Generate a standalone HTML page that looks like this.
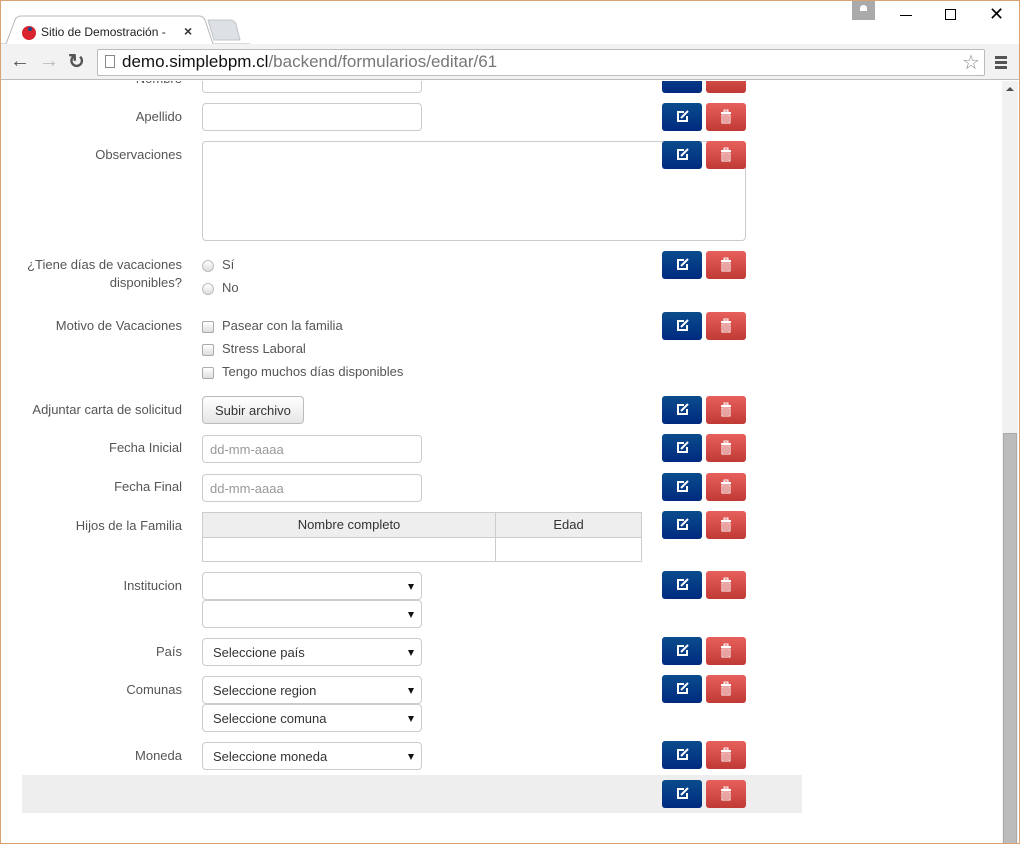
<!DOCTYPE html>
<html><head><meta charset="utf-8"><style>
*{box-sizing:border-box;margin:0;padding:0}
body{width:1020px;height:844px;overflow:hidden;background:#fff;font-family:"Liberation Sans",Arial,sans-serif;font-size:13px;color:#333;position:relative}
.a{position:absolute}
.lbl{position:absolute;right:838px;text-align:right;color:#555;font-size:13px;line-height:18px}
.inp{position:absolute;left:202px;width:220px;height:28px;border:1px solid #ccc;border-radius:4px;background:#fff;color:#999;font-size:13px;padding:6px 7px}
.sel{position:absolute;left:202px;width:220px;height:28px;border:1px solid #ccc;border-radius:4px;background:#fff;color:#333;font-size:13px;padding:6px 10px}
.sel:after{content:"";position:absolute;right:7px;top:11px;border-left:3.5px solid transparent;border-right:3.5px solid transparent;border-top:6px solid #111}
.be{position:absolute;left:662px;width:40px;height:28px;border-radius:3px;background:linear-gradient(#0a4c8c,#002a80);}
.bd{position:absolute;left:706px;width:40px;height:28px;border-radius:3px;background:linear-gradient(#e8605c,#c03a35);}
.opt{position:absolute;left:222px;color:#555;font-size:13px}
.rad{position:absolute;left:202px;width:12px;height:12px;border-radius:50%;border:1px solid #bbb;background:linear-gradient(#fff,#ddd)}
.chk{position:absolute;left:202px;width:12px;height:12px;border-radius:2px;border:1px solid #aaa;background:linear-gradient(#fff,#ddd)}
</style></head><body>
<!-- window frame -->
<div class="a" style="left:0;top:0;width:1020px;height:844px;border:1px solid #d9a273;border-top-width:1px;pointer-events:none;z-index:10"></div>
<div class="a" style="left:0;top:0;width:1020px;height:44px;background:#fff"></div>
<!-- tab -->
<svg class="a" style="left:0;top:15px" width="250" height="30"><path d="M6 29 L15 5 Q17 1 21 1 L199 1 Q203 1 205 5 L213 29" fill="#fff" stroke="#b7b7b7"/><path d="M208 5 L230 5 Q234 5 236 9 L240 25 L214 25 Z" fill="#dde1e6" stroke="#c0c4c8"/><path d="M0 29 L6 29 M213 29 L1020 29" stroke="#b7b7b7"/></svg>
<div class="a" style="left:22px;top:26px;width:14px;height:14px;border-radius:50%;background:#d9232e"></div>
<div class="a" style="left:28px;top:27px;width:4px;height:4px;border-radius:50%;background:#1b4b8a"></div>
<div class="a" style="left:41px;top:25px;font-size:12px;color:#222;width:125px;overflow:hidden;white-space:nowrap">Sitio de Demostración - Fo</div>
<div class="a" style="left:184px;top:23px;font-size:14px;color:#333;font-weight:bold">×</div>
<div class="a" style="left:852px;top:1px;width:23px;height:19px;background:#aaa"></div>
<div class="a" style="left:860px;top:5px;width:7px;height:6px;border-radius:50% 50% 0 0;background:#fff"></div>
<div class="a" style="left:900px;top:15px;width:12px;height:1px;background:#000"></div>
<div class="a" style="left:945px;top:9px;width:11px;height:11px;border:1px solid #000"></div>
<div class="a" style="left:989px;top:4px;font-size:18px;color:#000">✕</div>
<!-- toolbar -->
<div class="a" style="left:1px;top:44px;width:1018px;height:36px;background:#f2f2f2;border-bottom:1px solid #bdbdbd"></div>
<div class="a" style="left:10px;top:50px;font-size:20px;color:#555;font-weight:bold">←</div>
<div class="a" style="left:39px;top:50px;font-size:20px;color:#bbb;font-weight:bold">→</div>
<div class="a" style="left:68px;top:49px;font-size:20px;color:#555;font-weight:bold">↻</div>
<div class="a" style="left:97px;top:49px;width:888px;height:27px;background:#fff;border:1px solid #bbb;border-radius:2px"></div>
<div class="a" style="left:105px;top:55px;width:10px;height:13px;border:1px solid #888;background:#fff"></div>
<div class="a" style="left:122px;top:52px;font-size:17px;color:#111">demo.simplebpm.cl<span style="color:#777">/backend/formularios/editar/61</span></div>
<div class="a" style="left:962px;top:50px;font-size:20px;color:#888">☆</div>
<div class="a" style="left:995px;top:56px;width:12px;height:3px;background:#555;box-shadow:0 5px 0 #555,0 10px 0 #555"></div>
<!-- scrollbar -->
<div class="a" style="left:1002px;top:81px;width:16px;height:763px;background:#f1f1f1"></div>
<div class="a" style="left:1006px;top:87px;border-left:4px solid transparent;border-right:4px solid transparent;border-bottom:4px solid #505050"></div>
<div class="a" style="left:1003px;top:433px;width:14px;height:411px;background:#bcbcbc;border:1px solid #aaa"></div>
<!-- content -->
<div class="a" style="left:22px;top:775px;width:780px;height:38px;background:#eee"></div>
<div class="lbl" style="top:70px;clip-path:inset(11px 0 0 0)">Nombre</div>
<div class="inp" style="top:66px;height:27px;clip-path:inset(15px -2px -2px -2px)"></div>
<div class="lbl" style="top:108px">Apellido</div>
<div class="inp" style="top:103px"></div>
<div class="lbl" style="top:146px">Observaciones</div>
<div class="inp" style="top:141px;width:544px;height:100px"></div>
<div class="lbl" style="top:256px;width:170px">¿Tiene días de vacaciones disponibles?</div>
<div class="rad" style="top:260px"></div><div class="opt" style="top:257px">Sí</div>
<div class="rad" style="top:283px"></div><div class="opt" style="top:280px">No</div>
<div class="lbl" style="top:317px">Motivo de Vacaciones</div>
<div class="chk" style="top:321px"></div><div class="opt" style="top:318px">Pasear con la familia</div>
<div class="chk" style="top:344px"></div><div class="opt" style="top:341px">Stress Laboral</div>
<div class="chk" style="top:367px"></div><div class="opt" style="top:364px">Tengo muchos días disponibles</div>
<div class="lbl" style="top:401px">Adjuntar carta de solicitud</div>
<div class="a" style="left:202px;top:396px;width:102px;height:28px;border:1px solid #bbb;border-radius:4px;background:linear-gradient(#fff,#e6e6e6);color:#333;padding:6px 12px">Subir archivo</div>
<div class="lbl" style="top:439px">Fecha Inicial</div>
<div class="inp" style="top:435px">dd-mm-aaaa</div>
<div class="lbl" style="top:478px">Fecha Final</div>
<div class="inp" style="top:474px">dd-mm-aaaa</div>
<div class="lbl" style="top:517px">Hijos de la Familia</div>
<div class="a" style="left:202px;top:512px;width:440px;height:50px;border:1px solid #ccc"></div>
<div class="a" style="left:203px;top:513px;width:438px;height:25px;background:#eee;border-bottom:1px solid #ccc"></div>
<div class="a" style="left:495px;top:513px;width:1px;height:48px;background:#ccc"></div>
<div class="a" style="left:203px;top:517px;width:292px;text-align:center;color:#333">Nombre completo</div>
<div class="a" style="left:496px;top:517px;width:145px;text-align:center;color:#333">Edad</div>
<div class="lbl" style="top:577px">Institucion</div>
<div class="sel" style="top:572px"></div>
<div class="sel" style="top:600px"></div>
<div class="lbl" style="top:643px">País</div>
<div class="sel" style="top:638px">Seleccione país</div>
<div class="lbl" style="top:681px">Comunas</div>
<div class="sel" style="top:676px">Seleccione region</div>
<div class="sel" style="top:704px">Seleccione comuna</div>
<div class="lbl" style="top:747px">Moneda</div>
<div class="sel" style="top:742px">Seleccione moneda</div>
<!-- buttons -->
<div id="btns"></div>
<svg width="0" height="0" style="position:absolute"><defs>
<symbol id="ed" viewBox="0 0 40 28"><path d="M22 9 H16 V18 H25 V13" fill="none" stroke="#fff" stroke-width="2"/><path d="M19 15 L26 8" stroke="#fff" stroke-width="2"/></symbol>
<symbol id="tr" viewBox="0 0 40 28"><rect x="15" y="9" width="10" height="2" fill="#fff"/><rect x="18" y="7" width="4" height="2" fill="none" stroke="#fff"/><path d="M16 12 H24 V20 H16 Z M18 13 V19 M20 13 V19 M22 13 V19" fill="none" stroke="#fff"/></symbol>
</defs></svg>
<div class="be" style="top:65px;clip-path:inset(16px 0 0 0)"></div><div class="bd" style="top:65px;clip-path:inset(16px 0 0 0)"></div>
<div class="be" style="top:103px"><svg width="40" height="28"><use href="#ed"/></svg></div><div class="bd" style="top:103px"><svg width="40" height="28"><use href="#tr"/></svg></div>
<div class="be" style="top:141px"><svg width="40" height="28"><use href="#ed"/></svg></div><div class="bd" style="top:141px"><svg width="40" height="28"><use href="#tr"/></svg></div>
<div class="be" style="top:251px"><svg width="40" height="28"><use href="#ed"/></svg></div><div class="bd" style="top:251px"><svg width="40" height="28"><use href="#tr"/></svg></div>
<div class="be" style="top:312px"><svg width="40" height="28"><use href="#ed"/></svg></div><div class="bd" style="top:312px"><svg width="40" height="28"><use href="#tr"/></svg></div>
<div class="be" style="top:396px"><svg width="40" height="28"><use href="#ed"/></svg></div><div class="bd" style="top:396px"><svg width="40" height="28"><use href="#tr"/></svg></div>
<div class="be" style="top:434px"><svg width="40" height="28"><use href="#ed"/></svg></div><div class="bd" style="top:434px"><svg width="40" height="28"><use href="#tr"/></svg></div>
<div class="be" style="top:473px"><svg width="40" height="28"><use href="#ed"/></svg></div><div class="bd" style="top:473px"><svg width="40" height="28"><use href="#tr"/></svg></div>
<div class="be" style="top:511px"><svg width="40" height="28"><use href="#ed"/></svg></div><div class="bd" style="top:511px"><svg width="40" height="28"><use href="#tr"/></svg></div>
<div class="be" style="top:571px"><svg width="40" height="28"><use href="#ed"/></svg></div><div class="bd" style="top:571px"><svg width="40" height="28"><use href="#tr"/></svg></div>
<div class="be" style="top:637px"><svg width="40" height="28"><use href="#ed"/></svg></div><div class="bd" style="top:637px"><svg width="40" height="28"><use href="#tr"/></svg></div>
<div class="be" style="top:675px"><svg width="40" height="28"><use href="#ed"/></svg></div><div class="bd" style="top:675px"><svg width="40" height="28"><use href="#tr"/></svg></div>
<div class="be" style="top:741px"><svg width="40" height="28"><use href="#ed"/></svg></div><div class="bd" style="top:741px"><svg width="40" height="28"><use href="#tr"/></svg></div>
<div class="be" style="top:780px"><svg width="40" height="28"><use href="#ed"/></svg></div><div class="bd" style="top:780px"><svg width="40" height="28"><use href="#tr"/></svg></div>
</body></html>
